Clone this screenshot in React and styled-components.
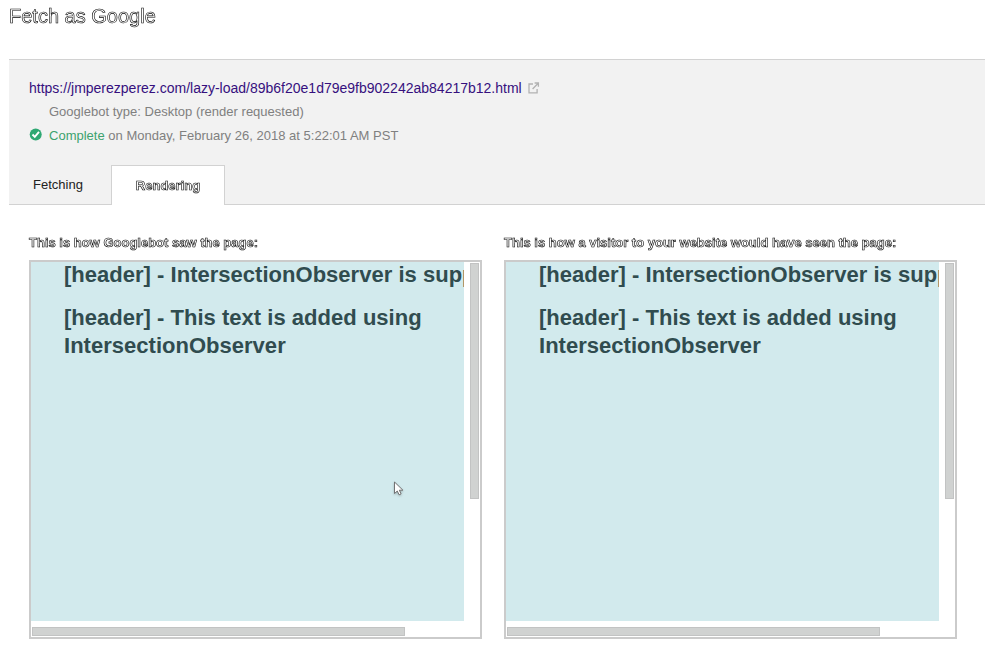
import React from 'react';
import styled, { createGlobalStyle, css } from 'styled-components';

const Global = createGlobalStyle`
  *, *::before, *::after { box-sizing: border-box; }
  body { margin: 0; background: #fff; font-family: "Liberation Sans", Arial, sans-serif; overflow: hidden; }
`;

const outlined = css`
  color: #fff;
  -webkit-text-stroke: 0.6px #000;
`;

const Page = styled.main`
  position: relative;
  width: 1000px;
  height: 662px;
  padding-left: 9px;
`;

const Title = styled.h1`
  ${outlined}
  margin: 0;
  height: 59px;
  padding-top: 5px;
  font-size: 20px;
  line-height: 23px;
  font-weight: 400;
  will-change: transform;
`;

const Summary = styled.section`
  display: flex;
  flex-direction: column;
  width: 976px;
  height: 146px;
  padding: 16px 0 0 20px;
  background: #f2f2f2;
  border-top: 1px solid #d2d2d2;
  border-bottom: 1px solid #d2d2d2;
`;

const UrlRow = styled.div`
  display: flex;
  align-items: center;
  gap: 6px;
  height: 23px;
`;

const Url = styled.a`
  color: #36107e;
  font-size: 14px;
  line-height: 22px;
  white-space: nowrap;
`;

const Detail = styled.div`
  display: flex;
  align-items: center;
  height: 24px;
  color: #808080;
  font-size: 13px;
  letter-spacing: 0.01px;
  white-space: pre;
`;

const IconSlot = styled.span`
  display: flex;
  width: 20px;
  padding-bottom: 2px;
`;

const Status = styled.span`
  color: #3da26e;
`;

const Tabs = styled.nav`
  display: flex;
  align-items: flex-start;
  margin: 17px 0 0 -20px;
`;

const Tab = styled.span`
  display: flex;
  align-items: center;
  justify-content: center;
  margin-top: 1px;
  font-size: 13px;
  ${(p) => (p.$active ? css`
    ${outlined}
    width: 114px;
    height: 40px;
    margin-bottom: -1px;
    font-weight: 700;
    background: #fff;
    border: 1px solid #d2d2d2;
    border-bottom: 0;
    will-change: transform;
  ` : css`
    width: 102px;
    height: 38px;
    padding-right: 4px;
    color: #222;
  `)}
`;

const Previews = styled.section`
  display: flex;
  gap: 22px;
  padding: 29px 0 0 20px;
`;

const Preview = styled.article`
  width: 453px;
`;

const Caption = styled.h2`
  ${outlined}
  margin: 0;
  height: 26px;
  font-size: 13px;
  line-height: 17px;
  font-weight: 700;
  white-space: nowrap;
  will-change: transform;
`;

const Frame = styled.div`
  display: grid;
  grid-template-columns: 433px 1fr;
  grid-template-rows: 359px 1fr;
  height: 379px;
  border: 2px solid #cbcbcb;
  background: #fff;
`;

const Viewport = styled.div`
  overflow: hidden;
  padding-left: 33px;
  background: #d2eaed;
  color: #304c4f;
  font-size: 22px;
  font-weight: 700;
  line-height: 28px;
  letter-spacing: 0.02px;
`;

const Heading = styled.p`
  margin: 0 0 15px;
  white-space: pre;

  &:first-child { margin-top: -1px; }
`;

const thumb = css`
  background: #d0d2d1;
  border: 1px solid #c2c3c3;
`;

const VerticalThumb = styled.div`
  ${thumb}
  width: 9px;
  height: 236px;
  margin: 1px 0 0 6px;
`;

const HorizontalThumb = styled.div`
  ${thumb}
  width: 373px;
  height: 9px;
  margin: 6px 0 0 1px;
`;

const Pointer = styled.svg`
  position: absolute;
  left: 391px;
  top: 480px;
  filter: drop-shadow(0 1px 1px rgba(0, 0, 0, 0.25));
`;

function CheckIcon() {
  return (
    <svg width="13" height="13" viewBox="0 0 13 13">
      <circle cx="6.7" cy="6.4" r="6" fill="#2fa873" />
      <path d="M3.5 6.5l2.3 2.4 4.2-5" fill="none" stroke="#fff" strokeWidth="1.9" />
    </svg>
  );
}

function OpenIcon() {
  return (
    <svg width="12" height="12" viewBox="0 0 12 12" fill="none" stroke="#b2b2b2" strokeWidth="1.3">
      <path d="M5 2H1v8.8H9.1V7M6.6 1h3.8v3.8M10.2 1.2L4.6 7" />
    </svg>
  );
}

function RenderedPage({ caption }) {
  return (
    <Preview>
      <Caption>{caption}</Caption>
      <Frame>
        <Viewport>
          <Heading>[header] - IntersectionObserver is supp</Heading>
          <Heading>{'[header] - This text is added using\nIntersectionObserver'}</Heading>
        </Viewport>
        <VerticalThumb />
        <HorizontalThumb />
      </Frame>
    </Preview>
  );
}

export default function App() {
  return (
    <Page>
      <Global />
      <Title>Fetch as Google</Title>
      <Summary>
        <UrlRow>
          <Url>https://jmperezperez.com/lazy-load/89b6f20e1d79e9fb902242ab84217b12.html</Url>
          <OpenIcon />
        </UrlRow>
        <Detail><IconSlot />Googlebot type: Desktop (render requested)</Detail>
        <Detail>
          <IconSlot><CheckIcon /></IconSlot>
          <Status>Complete</Status> on Monday, February 26, 2018 at 5:22:01 AM PST
        </Detail>
        <Tabs>
          <Tab>Fetching</Tab>
          <Tab $active>Rendering</Tab>
        </Tabs>
      </Summary>
      <Previews>
        <RenderedPage caption="This is how Googlebot saw the page:" />
        <RenderedPage caption="This is how a visitor to your website would have seen the page:" />
      </Previews>
      <Pointer width="14" height="18" viewBox="0 0 14 18">
        <path d="M3.5 2v11.5l2.8-2.5 1.8 3.8 2-.9-1.8-3.7h3.6z" fill="#fff" stroke="#666" strokeWidth=".9" />
      </Pointer>
    </Page>
  );
}
